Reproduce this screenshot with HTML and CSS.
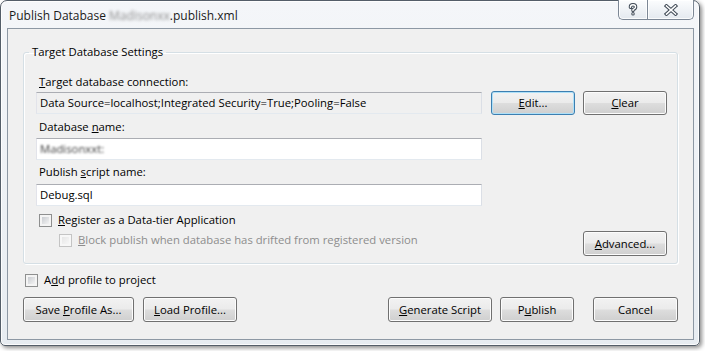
FILE: index.html
```html
<!DOCTYPE html>
<html>
<head>
<meta charset="utf-8">
<link rel="stylesheet" href="styles.css">
</head>
<body>
<div class="window">
  <div class="titlebar">
    <div class="title">Publish Database <span class="blur-title">Madisonxx</span>.publish.xml</div>
    <div class="caption">
      <div class="cbtn help">
        <svg width="10" height="13" viewBox="0 0 10 13">
          <g fill="none" stroke-linecap="round" stroke-linejoin="round">
            <path d="M2.4 4.2 Q2.4 1.8 5 1.8 Q7.6 1.8 7.6 4 Q7.6 5.6 5 6.6 L5 7.6 M5 10.8 L5 10.9" stroke="#3e4854" stroke-width="3.4"/>
            <path d="M2.4 4.2 Q2.4 1.8 5 1.8 Q7.6 1.8 7.6 4 Q7.6 5.6 5 6.6 L5 7.6 M5 10.8 L5 10.9" stroke="#ffffff" stroke-width="1.4"/>
          </g>
        </svg>
      </div>
      <div class="cbtn close">
        <svg width="14" height="12" viewBox="0 0 14 12">
          <g fill="none" stroke-linecap="square">
            <path d="M2.5 2 L11.5 10 M11.5 2 L2.5 10" stroke="#3e4854" stroke-width="3.6"/>
            <path d="M2.5 2 L11.5 10 M11.5 2 L2.5 10" stroke="#ffffff" stroke-width="1.6"/>
          </g>
        </svg>
      </div>
    </div>
  </div>
  <div class="client">
    <fieldset class="group">
      <legend>Target Database Settings</legend>
      <div class="lbl first"><u>T</u>arget database connection:</div>
      <div class="row conn">
        <div class="tb ro">Data Source=localhost;Integrated Security=True;Pooling=False</div>
        <div class="btn focus edit"><span><u>E</u>dit...</span></div>
        <div class="btn clear"><span><u>C</u>lear</span></div>
      </div>
      <div class="lbl">Database <u>n</u>ame:</div>
      <div class="tb name"><span class="blur-name">Madisonxxt:</span></div>
      <div class="lbl">Publish <u>s</u>cript name:</div>
      <div class="tb script">Debug.sql</div>
      <div class="chkrow reg"><span class="chk"></span><span><u>R</u>egister as a Data-tier Application</span></div>
      <div class="row adv">
        <div class="chkrow block dis"><span class="chk off"></span><span><u>B</u>lock publish when database has drifted from registered version</span></div>
        <div class="btn advbtn"><span><u>A</u>dvanced...</span></div>
      </div>
    </fieldset>
    <div class="chkrow addp"><span class="chk"></span><span>A<u>d</u>d profile to project</span></div>
    <div class="row bottom">
      <div class="btn save"><span>Save <u>P</u>rofile As...</span></div>
      <div class="btn load"><span><u>L</u>oad Profile...</span></div>
      <div class="spacer"></div>
      <div class="btn gen"><span><u>G</u>enerate Script</span></div>
      <div class="btn pub"><span>P<u>u</u>blish</span></div>
      <div class="btn cancel"><span>Cancel</span></div>
    </div>
  </div>
</div>
</body>
</html>
```
FILE: styles.css
```css
* { box-sizing: border-box; }
html, body { margin: 0; padding: 0; background: #ffffff; }
body {
  width: 705px;
  height: 351px;
  overflow: hidden;
  font-family: "Open Sans", "Noto Sans", sans-serif;
  font-size: 11.3px;
  color: #000;
}
u { text-decoration: underline; text-underline-offset: 1px; }

.window {
  width: 700px;
  height: 346px;
  border: 1px solid #545e69;
  border-radius: 7px 7px 5px 5px;
  background: linear-gradient(#f4f6f9, #e7ecf1);
  box-shadow: 2px 2px 4px rgba(0,0,0,.45), inset 0 0 0 1px rgba(255,255,255,.85);
  padding: 0 5px 5px 6px;
  display: flex;
  flex-direction: column;
}
.titlebar {
  height: 27px;
  display: flex;
  justify-content: space-between;
  align-items: flex-start;
}
.title {
  margin: 7px 0 0 2px;
  line-height: 16px;
  font-size: 12px;
  color: #1b1b1b;
}
.blur-title { filter: blur(1.4px); color: #8c8c8c; }
.caption { display: flex; margin-top: -1px; }
.cbtn {
  height: 20px;
  border: 1px solid #7c8795;
  border-top: none;
  background: linear-gradient(#fcfdfe, #e4e9ef);
  box-shadow: inset 0 0 0 1px rgba(255,255,255,.8);
  display: flex;
  align-items: center;
  justify-content: center;
}
.help { width: 29px; border-right: none; border-radius: 0 0 0 5px; }
.close { width: 47px; border-radius: 0 0 5px 0; }

.client {
  flex: 1;
  background: #f0f0f0;
  border: 1px solid #8d98a4;
  display: flex;
  flex-direction: column;
}
.group {
  margin: 15px 15px 0 15px;
  padding: 14px 10px 7px 12px;
  border: 1px solid #d5dfe5;
  border-radius: 3px;
  box-shadow: inset 1px 1px 0 #fff, 1px 1px 0 #fff;
  min-width: 0;
}
.group legend {
  padding: 0 3px;
  margin-left: -7px;
  line-height: 16px;
}
.lbl { line-height: 16px; padding-left: 3px; margin-top: 4px; }
.lbl.first { margin-top: 0; }
.row { display: flex; }
.conn { margin-top: 1px; height: 24px; align-items: center; }
.tb {
  width: 446px;
  height: 22px;
  border: 1px solid #abadb3;
  border-left-color: #e2e3ea;
  border-right-color: #dbdfe6;
  border-bottom-color: #e3e9ef;
  background: #fff;
  padding: 0 3px;
  line-height: 20px;
  white-space: nowrap;
}
.tb.ro { background: #f0f0f0; }
.tb.name { margin-top: 3px; }
.tb.script { margin-top: 4px; }
.blur-name { filter: blur(1.3px); color: #3c3c3c; }

.btn {
  height: 24px;
  border: 1px solid #707070;
  border-radius: 3px;
  background: linear-gradient(#f2f2f2 0%, #ebebeb 48%, #dddddd 52%, #cfcfcf 100%);
  box-shadow: inset 0 0 0 1px #fcfcfc;
  display: flex;
  align-items: center;
  justify-content: center;
  line-height: 16px;
  white-space: nowrap;
}
.btn.focus {
  border-color: #3c7fb1;
  box-shadow: inset 0 0 0 1px #aee0f8;
}
.edit { width: 84px; margin-left: 9px; }
.clear { width: 84px; margin-left: 8px; }

.chkrow { display: flex; align-items: center; line-height: 16px; }
.chk {
  width: 13px;
  height: 13px;
  border: 1px solid #8e8f8f;
  padding: 2px;
  background: linear-gradient(135deg, #c9ccd1, #f3f3f3) content-box, #f4f4f4;
  flex: none;
}
.chk.off {
  border-color: #c4c4c4;
  background: linear-gradient(135deg, #e6e6e6, #f7f7f7) content-box, #f7f7f7;
}
.reg { margin-top: 6px; padding-left: 3px; }
.reg .chk { margin-right: 6px; }
.adv { margin-top: 3px; justify-content: space-between; align-items: flex-start; }
.block { margin-top: 1px; padding-left: 23px; color: #8d8d8d; }
.block .chk { margin-right: 6px; }
.advbtn { width: 84px; height: 25px; }

.addp { margin: 8px 0 0 17px; }
.addp .chk { margin-right: 6px; }
.bottom { margin: 9px 15px 0 15px; }
.bottom .btn { height: 25px; }
.save { width: 111px; }
.load { width: 94px; margin-left: 9px; }
.spacer { flex: 1; }
.gen { width: 104px; }
.pub { width: 74px; margin-left: 8px; }
.cancel { width: 85px; margin-left: 19px; }
```
